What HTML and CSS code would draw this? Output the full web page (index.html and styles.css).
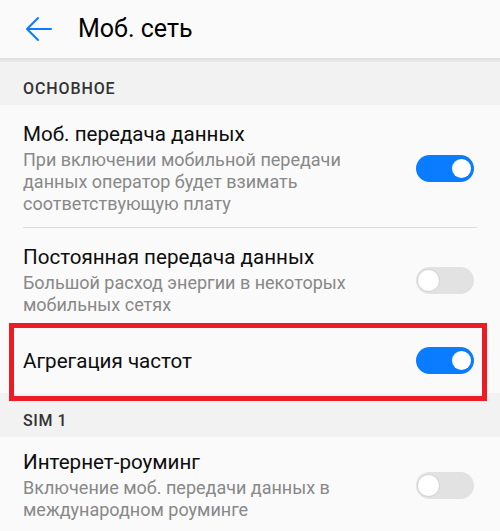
FILE: index.html
```html
<!DOCTYPE html>
<html lang="ru">
<head>
<meta charset="utf-8">
<link rel="stylesheet" href="styles.css">
</head>
<body>
<header class="appbar">
  <svg class="back" width="27" height="26" viewBox="0 0 27 26" aria-hidden="true">
    <path d="M26 13H2.5M13 2L2 13L13 24" fill="none" stroke="#0a7cff" stroke-width="2" stroke-linecap="round" stroke-linejoin="round"/>
  </svg>
  <h1 class="appbar-title">Моб. сеть</h1>
</header>
<div class="appbar-shadow"></div>

<div class="section-head">ОСНОВНОЕ</div>

<div class="item item-divided">
  <div class="item-text">
    <div class="item-title">Моб. передача данных</div>
    <div class="item-sub">При включении мобильной передачи данных оператор будет взимать соответствующую плату</div>
  </div>
  <span class="toggle toggle-on"><span class="knob"></span></span>
</div>

<div class="item">
  <div class="item-text">
    <div class="item-title">Постоянная передача данных</div>
    <div class="item-sub">Большой расход энергии в некоторых мобильных сетях</div>
  </div>
  <span class="toggle"><span class="knob"></span></span>
</div>

<div class="item item-single">
  <div class="item-text">
    <div class="item-title">Агрегация частот</div>
  </div>
  <span class="toggle toggle-on"><span class="knob"></span></span>
  <span class="highlight"></span>
</div>

<div class="section-head section-sim">SIM 1</div>

<div class="item item-tight">
  <div class="item-text">
    <div class="item-title">Интернет-роуминг</div>
    <div class="item-sub">Включение моб. передачи данных в международном роуминге</div>
  </div>
  <span class="toggle"><span class="knob"></span></span>
</div>
</body>
</html>
```

FILE: styles.css
```css
* { box-sizing: border-box; }

html, body {
  margin: 0;
  padding: 0;
  background: #fafafa;
  font-family: Roboto, "Noto Sans", "Liberation Sans", sans-serif;
  overflow: hidden;
}

.appbar {
  height: 58px;
  display: flex;
  align-items: center;
  padding-left: 25px;
  background: #fafafa;
}

.back {
  display: block;
  flex: none;
}

.appbar-title {
  margin: 0 0 0 26px;
  font-size: 25px;
  font-weight: 400;
  color: #000;
  line-height: 30px;
}

.appbar-shadow {
  height: 4px;
  background: linear-gradient(#dedede, #ececec);
}

.section-head {
  height: 43px;
  padding: 17px 0 0 23px;
  background: #f2f2f2;
  font-size: 16px;
  font-weight: 500;
  line-height: 20px;
  color: #333;
  letter-spacing: 0.9px;
}

.section-sim {
  height: 44px;
  padding-top: 18px;
  letter-spacing: 0.6px;
}

.item {
  position: relative;
  display: flex;
  align-items: center;
  padding: 16px 26px 12px 23px;
}

.item-divided::after {
  content: "";
  position: absolute;
  left: 23px;
  right: 23px;
  bottom: 0;
  height: 1px;
  background: #dcdcdc;
}

.item-divided {
  padding-bottom: 13px;
}

.item-single {
  padding-top: 19px;
  padding-bottom: 19px;
}

.item-tight {
  padding-top: 12px;
}

.item-text {
  flex: 1;
  min-width: 0;
  padding-right: 12px;
}

.item-title {
  font-size: 20.6px;
  line-height: 26px;
  color: #0d0d0d;
}

.item-sub {
  margin-top: 2px;
  font-size: 18px;
  line-height: 22px;
  color: #888;
  max-width: 360px;
}

.toggle {
  position: relative;
  flex: none;
  width: 58px;
  height: 27px;
  border-radius: 14px;
  background: #e2e2e2;
}

.toggle .knob {
  position: absolute;
  top: 3px;
  left: 2px;
  width: 21px;
  height: 21px;
  border-radius: 50%;
  background: #fff;
  box-shadow: 0 0 0 1px #d6d6d6;
}

.toggle-on {
  background: #0a7cff;
}

.toggle-on .knob {
  left: auto;
  right: 3px;
  top: 4px;
  width: 19px;
  height: 19px;
  box-shadow: none;
}

.highlight {
  position: absolute;
  z-index: 1;
  top: -5px;
  left: 9px;
  right: 13px;
  bottom: -8px;
  border: 5px solid #ed1c24;
  pointer-events: none;
}
```
